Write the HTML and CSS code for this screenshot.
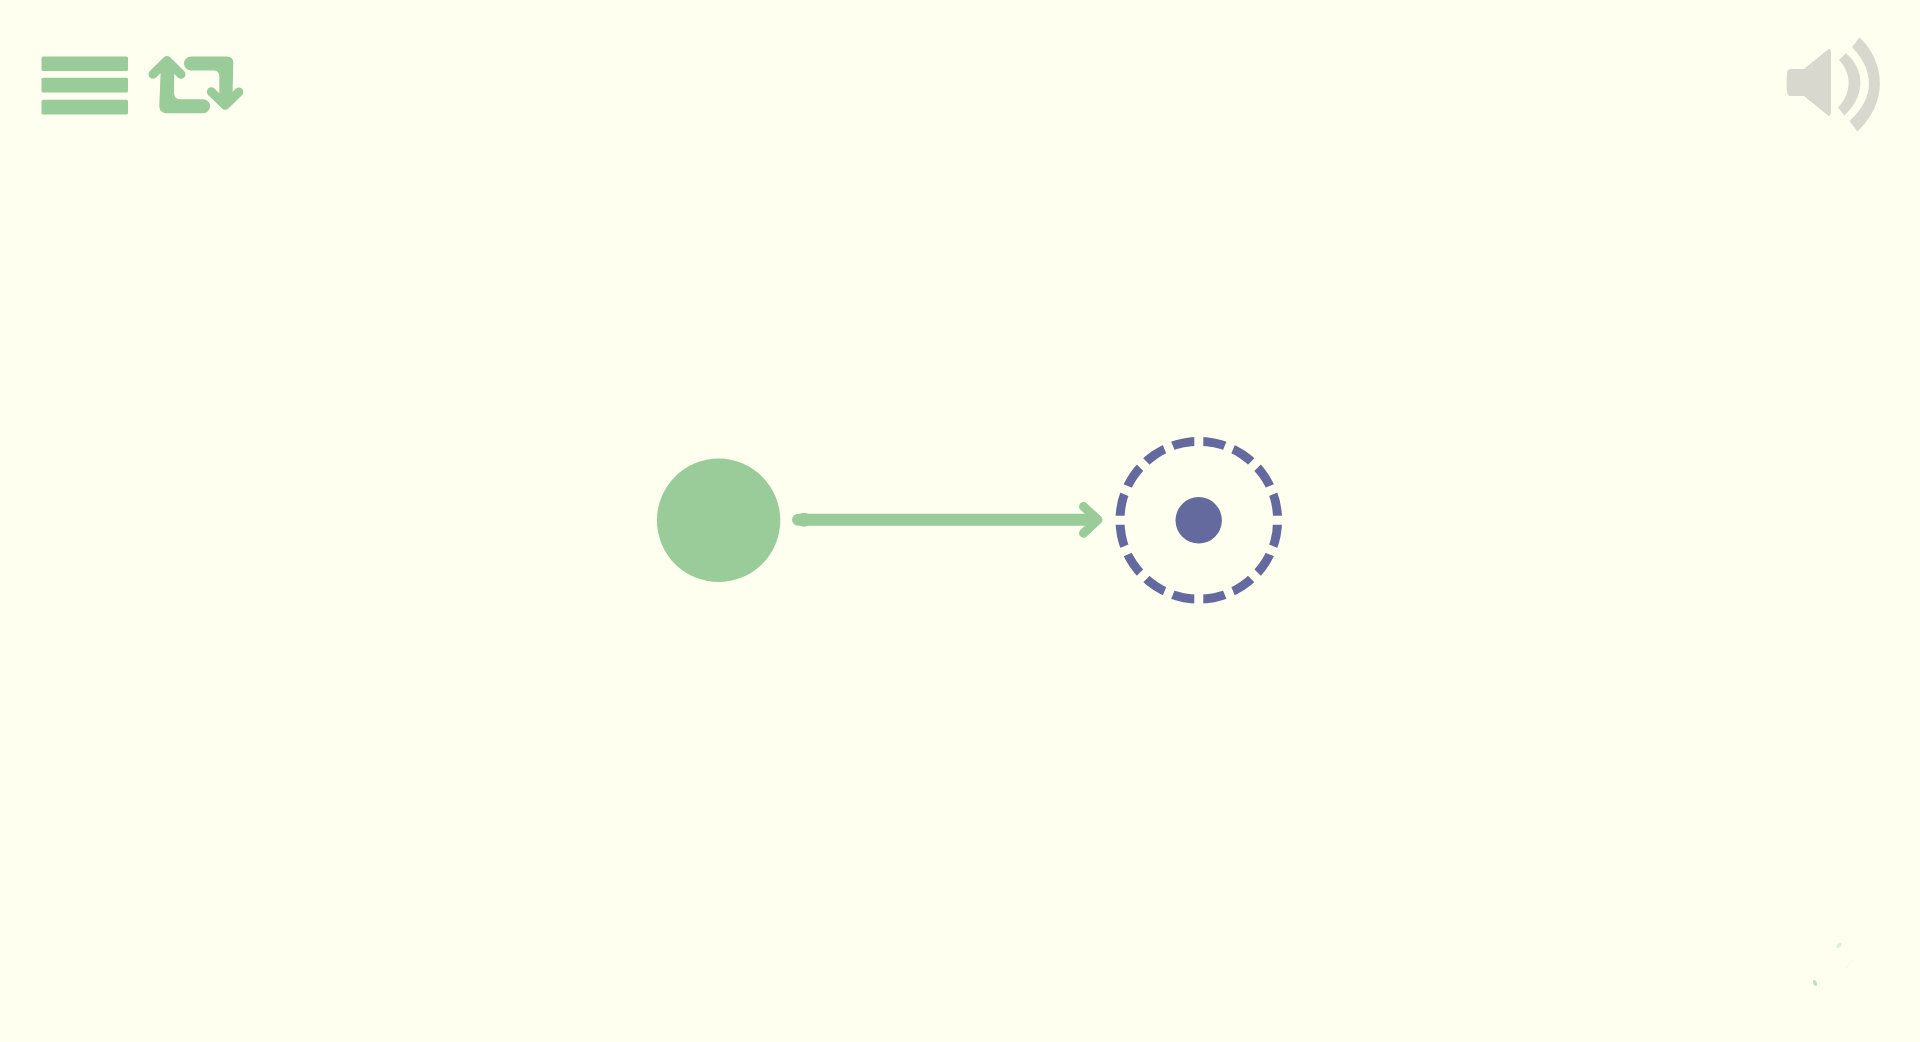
FILE: index.html
```html
<!DOCTYPE html>
<html lang="en">
<head>
<meta charset="utf-8">
<meta name="viewport" content="width=device-width, initial-scale=1">
<title>Puzzle</title>
<link rel="stylesheet" href="styles.css">
</head>
<body>
<div class="game">
  <main class="board">
    <svg class="scene" viewBox="0 0 1920 1042" role="img" aria-label="A ball with an arrow to its target">
      <circle class="ball" cx="718.6" cy="520.3" r="61.7"/>
      <path class="shaft" d="M798 519.7H1090"/>
      <circle class="ball" cx="804" cy="519.7" r="7"/>
      <path class="head" d="M1083.500 506.500L1098 519.800L1083.500 533.200"/>
      <circle class="ring" cx="1198.800" cy="520.200" r="78.800"/>
      <g class="spokes" transform="translate(1198.800 520.200)">
        <path d="M0-86V86"/>
        <path d="M0-86V86" transform="rotate(22.500)"/>
        <path d="M0-86V86" transform="rotate(45)"/>
        <path d="M0-86V86" transform="rotate(67.500)"/>
        <path d="M0-86V86" transform="rotate(90)"/>
        <path d="M0-86V86" transform="rotate(112.500)"/>
        <path d="M0-86V86" transform="rotate(135)"/>
        <path d="M0-86V86" transform="rotate(157.500)"/>
      </g>
      <circle class="dot" cx="1198.700" cy="520.300" r="23.200"/>
      <ellipse class="spark" cx="1815" cy="983" rx="1.800" ry="3.200" transform="rotate(-22 1815 983)"/>
      <ellipse class="spark spark-dim" cx="1839" cy="945.500" rx="2" ry="3" transform="rotate(40 1839 945.500)"/>
      <path class="trail" d="M1846 968L1853 959"/>
    </svg>
  </main>
  <header class="toolbar">
    <button class="tool" type="button" aria-label="Menu">
      <svg class="icon-menu" viewBox="0 0 88 60" aria-hidden="true">
        <rect x="1.500" y="1.400" width="86.500" height="14.600" rx="1.500"/>
        <rect x="1.500" y="22.800" width="86.500" height="14.600" rx="1.500"/>
        <rect x="1.500" y="44.800" width="86.500" height="14.600" rx="1.500"/>
      </svg>
    </button>
    <button class="tool" type="button" aria-label="Restart">
      <svg class="icon-restart" viewBox="0 0 96 60" aria-hidden="true">
        <path d="M43 1.500H79Q85.300 1.500 85.300 8L84.500 40L77.500 50L71.300 42V20.500Q71 16.200 66.500 15.500H43A7 7 0 0 1 43 1.500Z"/>
        <path class="tip" d="M63.300 36.800L77.200 50.300L90.800 37"/>
        <path d="M19 6L26.300 15L26 38.500Q26.500 43.800 31.500 44.300H55A7 7 0 0 1 55 58.300H18Q11.300 57.500 11.300 51L12.700 15Z"/>
        <path class="tip" d="M5 19.300L19 5.500L33 19.300"/>
      </svg>
    </button>
    <button class="tool tool-sound" type="button" aria-label="Sound">
      <svg class="icon-sound" viewBox="0 0 94 96" aria-hidden="true">
        <path d="M4 32H18L42 12.500Q45 11 45 15V76Q44.500 79.500 42 78.500L18 59H4Q1.500 58.500 1 55C.5 50 .5 41 1 36Q1.500 32.300 4 32Z"/>
        <path d="M60 16C79 33 80 58 58.500 78.500L52 70.500C66 57 66 36 53 23Z"/>
        <path d="M73.500 .5C98 23 104 64 71.500 94.500L63.500 84C91 59 87 32 66 10Z"/>
      </svg>
    </button>
  </header>
</div>
</body>
</html>
```
FILE: styles.css
```css
:root {
  --paper: #ffffef;
  --green: #99cc99;
  --blue: #646a9e;
  --grey: #d9d8ce;
}

body {
  margin: 0;
  background: var(--paper);
  font-family: "Open Sans", sans-serif;
}

/* The toolbar and the board share one grid cell, the toolbar on top. */
.game {
  display: grid;
  min-height: 100vh;
}

.board,
.toolbar {
  grid-area: 1 / 1;
}

.scene {
  display: block;
  width: 100%;
  height: 100vh;
}

.toolbar {
  display: flex;
  align-items: center;
  align-self: start;
  gap: 20px;
  padding: 37px 40px;
}

.tool {
  display: block;
  padding: 0;
  border: 0;
  background: none;
  color: var(--green);
  cursor: pointer;
}

.tool svg {
  display: block;
  fill: currentColor;
}

.tool-sound {
  margin-left: auto;
  color: var(--grey);
}

.icon-menu {
  width: 88px;
  height: 60px;
}

.icon-restart {
  width: 96px;
  height: 60px;
}

.icon-restart .tip {
  fill: none;
  stroke: currentColor;
  stroke-width: 9;
  stroke-linecap: round;
  stroke-linejoin: round;
}

.icon-sound {
  width: 94px;
  height: 96px;
}

.ball {
  fill: var(--green);
}

.shaft {
  fill: none;
  stroke: var(--green);
  stroke-width: 12;
  stroke-linecap: round;
}

.head {
  fill: none;
  stroke: var(--green);
  stroke-width: 9;
  stroke-linecap: round;
  stroke-linejoin: round;
}

.ring {
  fill: none;
  stroke: var(--blue);
  stroke-width: 9;
}

.spokes {
  stroke: var(--paper);
  stroke-width: 9;
}

.dot {
  fill: var(--blue);
}

.spark {
  fill: var(--green);
  opacity: 0.6;
}

.spark-dim {
  opacity: 0.3;
}

.trail {
  stroke: var(--green);
  opacity: 0.15;
}
```
